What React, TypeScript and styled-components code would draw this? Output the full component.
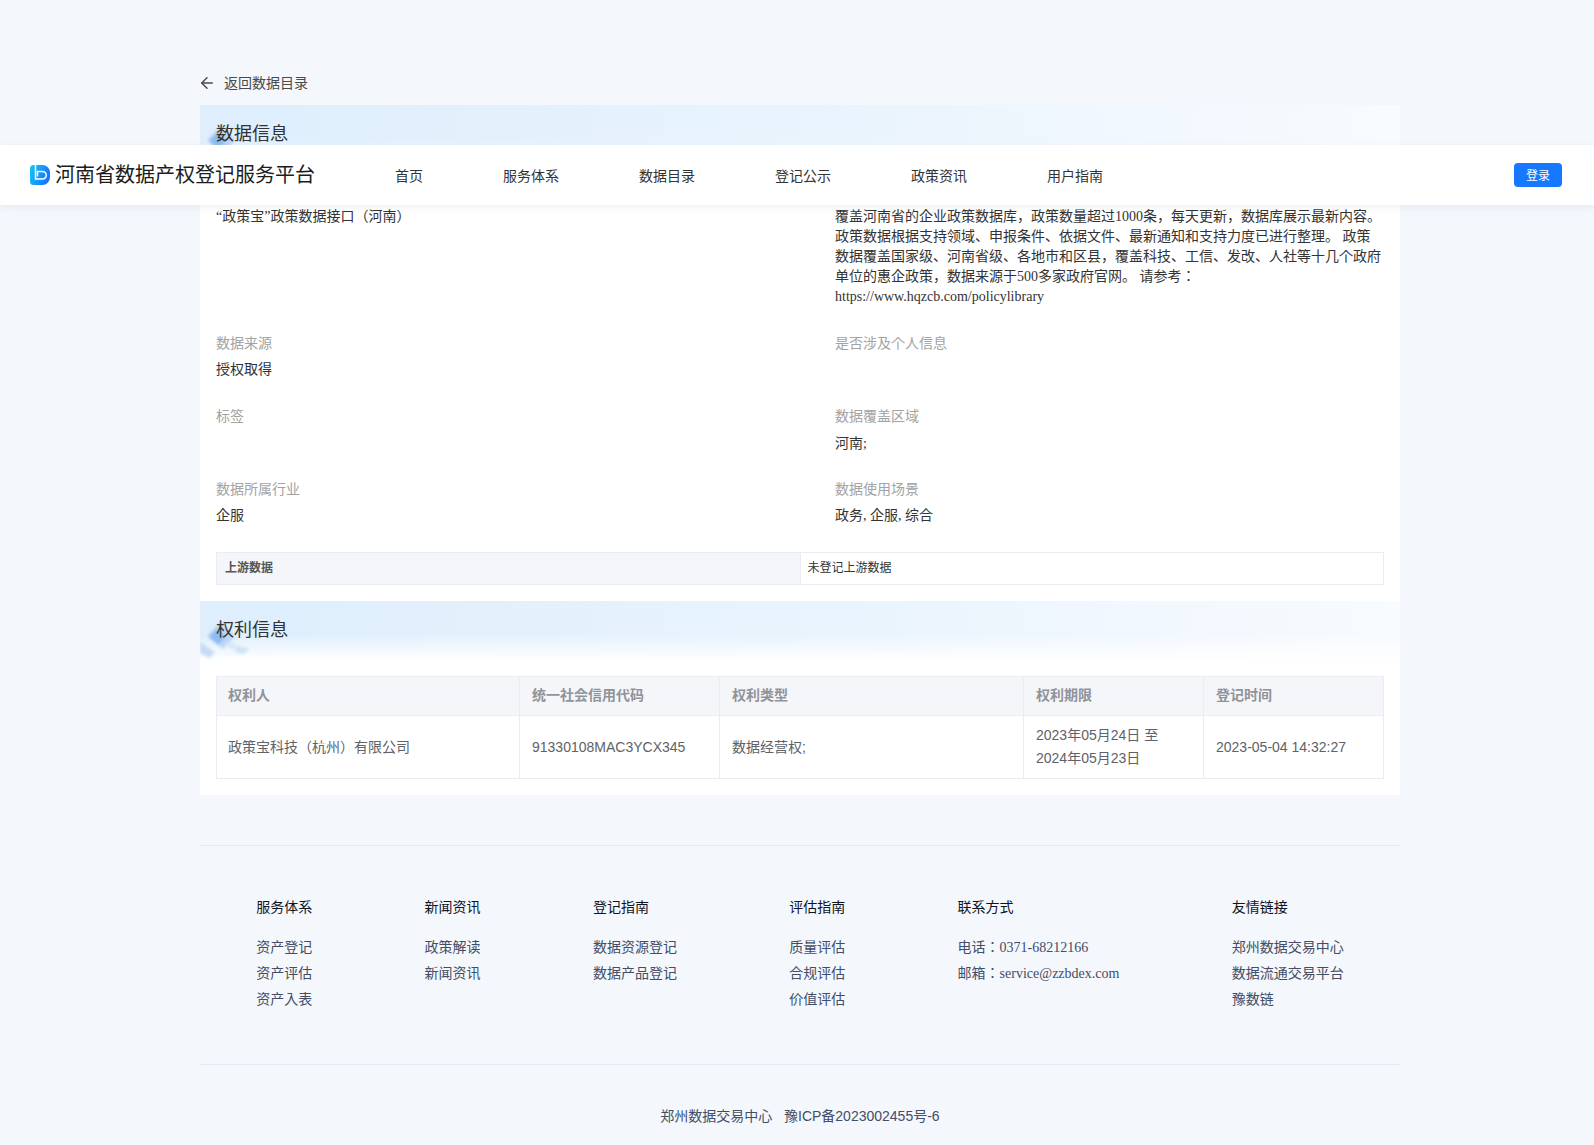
import styled, { createGlobalStyle } from "styled-components";
import { ArrowLeft } from "lucide-react";

const SANS = `"Liberation Sans", "Noto Sans CJK JP", sans-serif`;
const SERIF = `"Liberation Serif", "Noto Sans CJK JP", serif`;

const GlobalStyle = createGlobalStyle`
    * {
        box-sizing: border-box;
    }
    body {
        margin: 0;
        background: #f4f7fc;
        font-family: ${SERIF};
    }
`;

const Page = styled.div`
    position: relative;
    width: 100%;
    overflow: hidden;
`;

const TopBar = styled.header`
    position: absolute;
    top: 145px;
    left: 0;
    right: 0;
    z-index: 10;
    height: 60px;
    padding: 0 32px 0 30px;
    display: flex;
    align-items: center;
    background: #fff;
    box-shadow: 0 2px 8px rgba(30, 50, 90, 0.07);
`;

const Brand = styled.div`
    display: flex;
    align-items: center;
    gap: 5px;
    font-size: 20px;
    line-height: 28px;
    color: #1c1c1c;
`;

const NavLinks = styled.nav`
    flex: 1;
    display: flex;
    gap: 80px;
    margin-left: 80px;
    padding-top: 3px;
`;

const NavLink = styled.a`
    font-size: 14px;
    line-height: 20px;
    color: #333;
`;

const LoginButton = styled.button`
    width: 48px;
    height: 24px;
    padding: 0;
    border: 0;
    border-radius: 4px;
    background: #1677ff;
    color: #fff;
    font-family: ${SERIF};
    font-size: 12px;
`;

const Main = styled.main`
    width: 1200px;
    margin-left: 200px;
    padding-top: 72px;
`;

const BackLink = styled.a`
    display: flex;
    align-items: center;
    gap: 8px;
    height: 20px;
    margin-bottom: 13px;
    font-size: 14px;
    color: #4a4a4a;
    svg {
        margin: 2px 0 0 -2px;
    }
`;

const Panel = styled.section`
    background: #fff;
    padding-bottom: 16px;
`;

const Band = styled.div`
    position: relative;
    height: 60px;
    padding-left: 16px;
    background:
        linear-gradient(180deg, rgba(255, 255, 255, 0) 55%, #fff 100%),
        linear-gradient(90deg, #deeefc 0%, #e8f3fd 50%, #f8fbff 100%);
`;

const BandTitle = styled.h2`
    position: relative;
    margin: 0;
    font-size: 18px;
    font-weight: 400;
    line-height: 58px;
    color: #333;
`;

const BandArt = styled.svg`
    position: absolute;
    left: 0;
    top: 10px;
`;

const Section = styled.div<{ $top: number }>`
    padding: ${p => p.$top}px 16px 0;
`;

const InfoGrid = styled.div`
    display: grid;
    grid-template-columns: 549px 549px;
    column-gap: 70px;
    margin-bottom: -1px;
`;

const InfoCell = styled.div`
    padding-bottom: 27px;
`;

const Label = styled.div`
    font-size: 14px;
    line-height: 20px;
    color: #a3a3a3;
`;

const Value = styled.div<{ $low?: boolean }>`
    margin-top: ${p => (p.$low ? "7px" : "6px")};
    margin-bottom: ${p => (p.$low ? "-1px" : "0")};
    min-height: 20px;
    font-size: 14px;
    line-height: 20px;
    color: #333;
`;

const SmallTable = styled.table`
    width: 100%;
    table-layout: fixed;
    border-collapse: collapse;
    margin-bottom: 16px;
`;

const SmallHead = styled.th`
    height: 32px;
    padding: 0 8px 4px;
    border: 1px solid #e9ecf3;
    background: #f5f6fa;
    font-size: 12px;
    font-weight: 700;
    text-align: left;
    color: #555;
`;

const SmallCell = styled.td`
    height: 32px;
    padding: 0 7px 3px;
    border: 1px solid #e9ecf3;
    font-size: 12px;
    color: #333;
`;

const RightsTable = styled.table`
    width: 1167px;
    table-layout: fixed;
    border-collapse: collapse;
    font-family: ${SANS};
`;

const RightsHead = styled.th`
    padding: 7px 12px 8px;
    border: 1px solid #e9ecf3;
    background: #f5f6fa;
    font-size: 14px;
    font-weight: 700;
    line-height: 23px;
    text-align: left;
    color: #909399;
    &:first-child {
        padding-left: 11px;
    }
`;

const RightsCell = styled.td`
    padding: 8px 12px;
    border: 1px solid #e9ecf3;
    font-size: 14px;
    line-height: 23px;
    color: #606266;
    &:first-child {
        padding-left: 11px;
    }
`;

const Rule = styled.hr`
    margin: 0;
    border: 0;
    border-top: 1px solid #e6e9f0;
`;

const Footer = styled.footer`
    margin-top: 50px;
`;

const FooterColumns = styled.div`
    display: flex;
    justify-content: space-around;
    padding: 52px 0 54px;
`;

const FooterColumn = styled.div`
    display: flex;
    flex-direction: column;
    gap: 6px;
    font-size: 14px;
    line-height: 20px;
`;

const FooterTitle = styled.div`
    margin-bottom: 14px;
    color: #10141c;
`;

const FooterLink = styled.a`
    color: #434e66;
`;

const Copyright = styled.div`
    padding: 41px 0 24px;
    font-family: ${SANS};
    font-size: 14px;
    line-height: 20px;
    text-align: center;
    white-space: pre;
    color: #434e66;
`;

const NAV = ["首页", "服务体系", "数据目录", "登记公示", "政策资讯", "用户指南"];

const FOOTER = [
    { title: "服务体系", links: ["资产登记", "资产评估", "资产入表"] },
    { title: "新闻资讯", links: ["政策解读", "新闻资讯"] },
    { title: "登记指南", links: ["数据资源登记", "数据产品登记"] },
    { title: "评估指南", links: ["质量评估", "合规评估", "价值评估"] },
    { title: "联系方式", links: ["电话：0371-68212166", "邮箱：service@zzbdex.com"] },
    { title: "友情链接", links: ["郑州数据交易中心", "数据流通交易平台", "豫数链"] },
];

const RIGHTS_COLS = [
    { name: "权利人", width: 303 },
    { name: "统一社会信用代码", width: 200 },
    { name: "权利类型", width: 304 },
    { name: "权利期限", width: 180 },
    { name: "登记时间", width: 180 },
];

function Logo() {
    return (
        <svg width="20" height="20" viewBox="0 0 20 20">
            <defs>
                <linearGradient id="logoFill" x1="0" y1="0" x2="1" y2="0.4">
                    <stop offset="0" stopColor="#14c8f5" />
                    <stop offset="1" stopColor="#1677ff" />
                </linearGradient>
            </defs>
            <path d="M3.5 0h9a7.5 7.5 0 0 1 7.5 7.5v5a7.5 7.5 0 0 1-7.5 7.5h-9A3.5 3.5 0 0 1 0 16.5v-13A3.5 3.5 0 0 1 3.5 0z" fill="url(#logoFill)" />
            <path d="M5.5 0V14H12.5a3.5 3.5 0 0 0 0-7.500H7.500V11.500" fill="none" stroke="#fff" strokeWidth="1.5" />
        </svg>
    );
}

function DiamondArt({ id }: { id: string }) {
    return (
        <BandArt width="60" height="50" viewBox="0 0 60 50">
            <defs>
                <filter id={id} x="-30%" y="-30%" width="160%" height="160%">
                    <feGaussianBlur stdDeviation="1.4" />
                </filter>
            </defs>
            <g fill="none" stroke="#e6f0fb" strokeWidth="0.8">
                <path d="M28 4 52 24 28 44 5 24z" />
                <path d="M28 11 44 24 28 37 13 24z" />
            </g>
            <g filter={`url(#${id})`}>
                <path d="M20 12 35 25 23 38 7 25z" fill="#bcd7f6" />
                <path d="M17 17 26 26 18 34 9 26z" fill="#8dbcf0" />
                <path d="M30 30 38 35 33 39 25 34z" fill="#d8e8fa" />
                <path d="M38 35 50 38 43 43 34 41z" fill="#cfe2f8" />
                <path d="M0 31 15 41 10 47 0 42z" fill="#c6dcf5" />
            </g>
        </BandArt>
    );
}

function Info({ label, value, low }: { label: string; value?: string; low?: boolean }) {
    return (
        <InfoCell>
            <Label>{label}</Label>
            <Value $low={low}>{value}</Value>
        </InfoCell>
    );
}

export default function App() {
    return (
        <Page>
            <GlobalStyle />
            <TopBar>
                <Brand>
                    <Logo />
                    河南省数据产权登记服务平台
                </Brand>
                <NavLinks>
                    {NAV.map(item => <NavLink key={item}>{item}</NavLink>)}
                </NavLinks>
                <LoginButton>登录</LoginButton>
            </TopBar>
            <Main>
                <BackLink>
                    <ArrowLeft size={18} />
                    返回数据目录
                </BackLink>
                <Panel>
                    <Band>
                        <DiamondArt id="blurA" />
                        <BandTitle>数据信息</BandTitle>
                    </Band>
                    <Section $top={16}>
                        <InfoGrid>
                            <Info label="数据名称" value="“政策宝”政策数据接口（河南）" />
                            <Info
                                label="数据简介"
                                value="覆盖河南省的企业政策数据库，政策数量超过1000条，每天更新，数据库展示最新内容。政策数据根据支持领域、申报条件、依据文件、最新通知和支持力度已进行整理。 政策数据覆盖国家级、河南省级、各地市和区县，覆盖科技、工信、发改、人社等十几个政府单位的惠企政策，数据来源于500多家政府官网。 请参考：https://www.hqzcb.com/policylibrary"
                            />
                            <Info label="数据来源" value="授权取得" />
                            <Info label="是否涉及个人信息" />
                            <Info label="标签" />
                            <Info label="数据覆盖区域" value="河南;" low />
                            <Info label="数据所属行业" value="企服" />
                            <Info label="数据使用场景" value="政务, 企服, 综合" />
                        </InfoGrid>
                        <SmallTable>
                            <tbody>
                                <tr>
                                    <SmallHead>上游数据</SmallHead>
                                    <SmallCell>未登记上游数据</SmallCell>
                                </tr>
                            </tbody>
                        </SmallTable>
                    </Section>
                    <Band>
                        <DiamondArt id="blurB" />
                        <BandTitle>权利信息</BandTitle>
                    </Band>
                    <Section $top={15}>
                        <RightsTable>
                            <colgroup>
                                {RIGHTS_COLS.map(col => <col key={col.name} width={col.width} />)}
                            </colgroup>
                            <thead>
                                <tr>
                                    {RIGHTS_COLS.map(col => <RightsHead key={col.name}>{col.name}</RightsHead>)}
                                </tr>
                            </thead>
                            <tbody>
                                <tr>
                                    <RightsCell>政策宝科技（杭州）有限公司</RightsCell>
                                    <RightsCell>91330108MAC3YCX345</RightsCell>
                                    <RightsCell>数据经营权;</RightsCell>
                                    <RightsCell>2023年05月24日 至<br />2024年05月23日</RightsCell>
                                    <RightsCell>2023-05-04 14:32:27</RightsCell>
                                </tr>
                            </tbody>
                        </RightsTable>
                    </Section>
                </Panel>
                <Footer>
                    <Rule />
                    <FooterColumns>
                        {FOOTER.map(col => (
                            <FooterColumn key={col.title}>
                                <FooterTitle>{col.title}</FooterTitle>
                                {col.links.map(link => <FooterLink key={link}>{link}</FooterLink>)}
                            </FooterColumn>
                        ))}
                    </FooterColumns>
                    <Rule />
                    <Copyright>郑州数据交易中心   豫ICP备2023002455号-6</Copyright>
                </Footer>
            </Main>
        </Page>
    );
}
